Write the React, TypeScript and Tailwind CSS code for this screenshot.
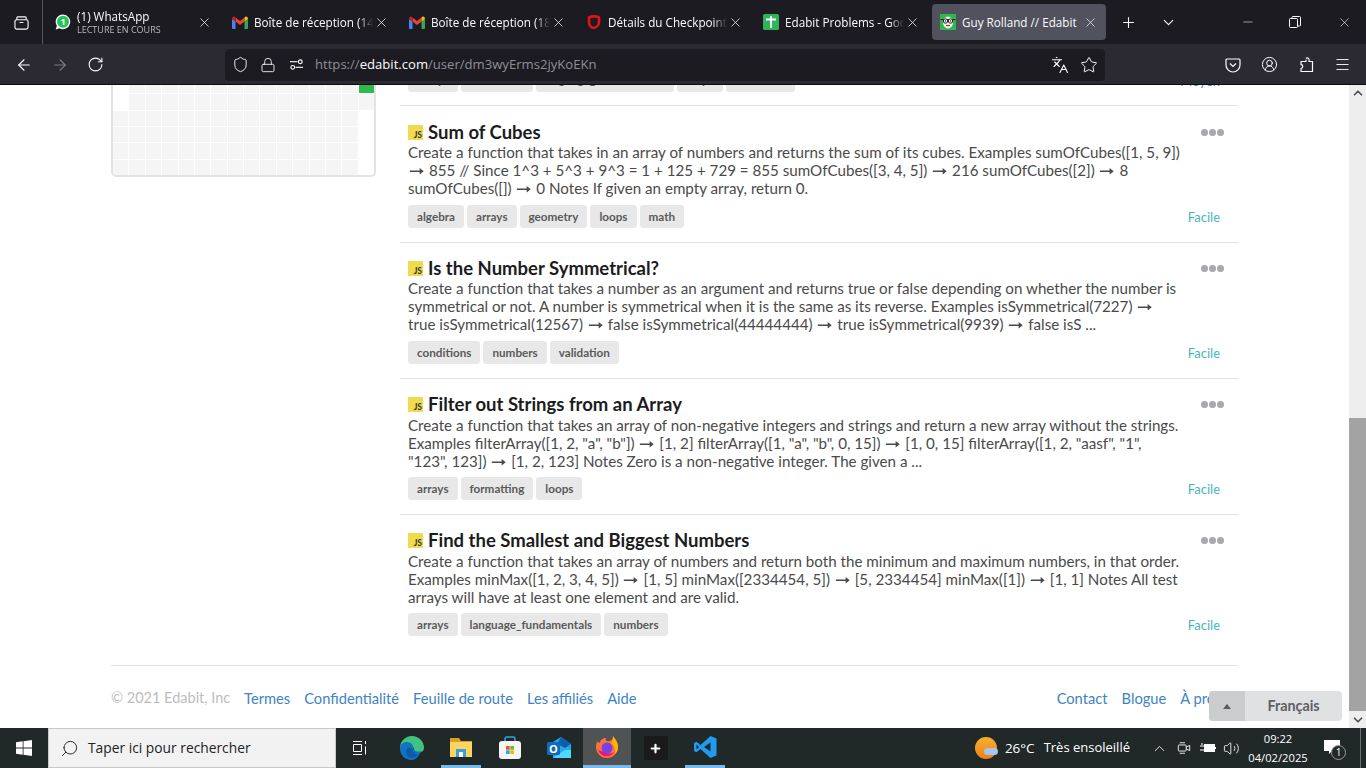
import {
  ArrowLeft,
  ArrowRight,
  ChevronDown,
  ChevronUp,
  CircleUserRound,
  Languages,
  Lock,
  Menu,
  Minus,
  Plus,
  RotateCw,
  Search,
  Shield,
  Star,
  Volume2,
  X,
} from "lucide-react";

const problems = [
  {
    title: "Sum of Cubes",
    desc: "Create a function that takes in an array of numbers and returns the sum of its cubes. Examples sumOfCubes([1, 5, 9]) ➞ 855 // Since 1^3 + 5^3 + 9^3 = 1 + 125 + 729 = 855 sumOfCubes([3, 4, 5]) ➞ 216 sumOfCubes([2]) ➞ 8 sumOfCubes([]) ➞ 0 Notes If given an empty array, return 0.",
    tags: ["algebra", "arrays", "geometry", "loops", "math"],
  },
  {
    title: "Is the Number Symmetrical?",
    desc: "Create a function that takes a number as an argument and returns true or false depending on whether the number is symmetrical or not. A number is symmetrical when it is the same as its reverse. Examples isSymmetrical(7227) ➞ true isSymmetrical(12567) ➞ false isSymmetrical(44444444) ➞ true isSymmetrical(9939) ➞ false isS ...",
    tags: ["conditions", "numbers", "validation"],
  },
  {
    title: "Filter out Strings from an Array",
    desc: 'Create a function that takes an array of non-negative integers and strings and return a new array without the strings. Examples filterArray([1, 2, "a", "b"]) ➞ [1, 2] filterArray([1, "a", "b", 0, 15]) ➞ [1, 0, 15] filterArray([1, 2, "aasf", "1", "123", 123]) ➞ [1, 2, 123] Notes Zero is a non-negative integer. The given a ...',
    tags: ["arrays", "formatting", "loops"],
  },
  {
    title: "Find the Smallest and Biggest Numbers",
    desc: "Create a function that takes an array of numbers and return both the minimum and maximum numbers, in that order. Examples minMax([1, 2, 3, 4, 5]) ➞ [1, 5] minMax([2334454, 5]) ➞ [5, 2334454] minMax([1]) ➞ [1, 1] Notes All test arrays will have at least one element and are valid.",
    tags: ["arrays", "language_fundamentals", "numbers"],
  },
];

const Gmail = () => (
  <svg viewBox="0 0 16 13" className="w-[16px] h-[13px] shrink-0">
    <path d="M0 3v9a1 1 0 0 0 1 1h2.5V5.5z" fill="#4285f4" />
    <path d="M16 3v9a1 1 0 0 1-1 1h-2.5V5.5z" fill="#34a853" />
    <path d="M3.5 5.5 8 9l4.5-3.5v-4L8 5 3.500 1.500z" fill="#ea4335" />
    <path d="M0 3c0-2.500 2.300-3.500 3.500-1.500v4z" fill="#c5221f" />
    <path d="M16 3c0-2.500-2.300-3.500-3.500-1.500v4z" fill="#fbbc04" />
  </svg>
);

const WhatsApp = () => (
  <svg viewBox="0 0 16 16" className="w-[16px] h-[16px] shrink-0">
    <path d="M8 .5a7.300 7.300 0 1 1-3.600 13.700L.7 15.400l1.200-3.600A7.300 7.300 0 0 1 8 .5z" fill="#fff" />
    <circle cx="8" cy="7.800" r="6" fill="#25c35b" />
    <text x="8" y="11" textAnchor="middle" fontSize="9" fontWeight="700" fill="#fff">1</text>
  </svg>
);

const EdabitFace = () => (
  <svg viewBox="0 0 16 16" className="w-[16px] h-[16px] shrink-0">
    <rect width="16" height="16" fill="#2fb84f" />
    <ellipse cx="8" cy="8.500" rx="5" ry="6" fill="#f1f1ea" />
    <path d="M.5 5.500h15" stroke="#222" strokeWidth="1" />
    <circle cx="5.500" cy="7" r="2.200" fill="#fff" stroke="#222" strokeWidth="1" />
    <circle cx="10.500" cy="7" r="2.200" fill="#fff" stroke="#222" strokeWidth="1" />
    <circle cx="5.500" cy="7" r="0.800" fill="#222" />
    <circle cx="10.500" cy="7" r="0.800" fill="#222" />
    <path d="M6 11.500h4" stroke="#b03030" strokeWidth="1.200" />
  </svg>
);

type TabProps = {
  icon: React.ReactNode;
  label: string;
  sub?: string;
  active?: boolean;
};

const Tab = ({ icon, label, sub, active }: TabProps) => (
  <div className={`flex items-center shrink-0 h-[36px] rounded-[4px] ${active ? "w-[174px] ml-[4px] pl-[8px] pr-[8px] bg-[#52525e]" : "w-[177px] pl-[12px] pr-[8px]"}`}>
    {icon}
    <div className={`flex-1 min-w-0 ml-[6px] overflow-hidden whitespace-nowrap ${active ? "" : "[mask-image:linear-gradient(to_right,black_88%,transparent)]"}`}>
      <div className="text-[11.700px] leading-[15px] text-[#fbfbfe]">{label}</div>
      {sub && <div className="text-[9px] leading-[12px] text-[#b8b8c0]">{sub}</div>}
    </div>
    <X className="w-[15px] h-[15px] shrink-0 ml-[1px] text-[#e8e8ec]" strokeWidth={1.300} />
  </div>
);

// the arrow comes from a fallback font, its advance is wider on the real page
const Desc = ({ text, low }: { text: string; low?: boolean }) => (
  <p className={`w-[776px] text-[15.170px] leading-[18px] text-[#4a4a4a] ${low ? "mt-[2px] mb-[7px]" : "mt-[1px] mb-[8px]"}`}>
    {text.split("➞").map((part, i) => (
      <span key={i}>
        {i > 0 && <span className="inline-block h-0 w-[13.500px] mx-[1.750px] text-center leading-[0] scale-x-125 font-['DejaVu_Sans',sans-serif]">➞</span>}
        {part}
      </span>
    ))}
  </p>
);

type ProblemProps = { title: string; desc: string; tags: string[]; index: number };

const Problem = ({ title, desc, tags, index }: ProblemProps) => (
  <div className={`border-t border-[#e1e1e1] px-[8px] ${index === 0 ? "h-[137px] pt-[16px]" : "h-[136px] pt-[15px]"}`}>
    <div className="flex items-start justify-between w-[816px]">
      <div className="flex items-center h-[20px]">
        <div className="w-[15px] h-[15px] bg-[#f0db4f] flex items-end justify-end pr-[1px] text-[8.500px] leading-[10px] font-bold text-[#323330]">JS</div>
        <h3 className="ml-[5px] text-[18.500px] leading-[20px] font-bold text-[#1b1c1d]">{title}</h3>
      </div>
      <div className="flex items-center gap-[1px] h-[20px]">
        <span className="w-[7px] h-[7px] rounded-full bg-[#a9a9ad]" />
        <span className="w-[7px] h-[7px] rounded-full bg-[#a9a9ad]" />
        <span className="w-[7px] h-[7px] rounded-full bg-[#a9a9ad]" />
      </div>
    </div>
    <Desc text={desc} low={index > 1} />
    <div className="flex items-center justify-between w-[812px]">
      <div className="flex gap-[3px]">
        {tags.map((t) => (
          <span key={t} className="h-[23px] px-[9px] rounded-[3px] bg-[#e8e8e8] text-[11.700px] leading-[23px] font-bold text-[#5a5a5a]">{t}</span>
        ))}
      </div>
      <span className="text-[13px] text-[#45b8b8] mt-[2px]">Facile</span>
    </div>
  </div>
);

const cells = Array.from({ length: 96 }, (_, i) => i);

const cellColor = (i: number) => {
  if (i === 15) return "bg-[#2fba4f]";
  if (i === 0 || i === 16 || (i > 31 && i % 16 === 15)) return "bg-white";
  return "bg-[#f5f5f5]";
};

export default function App() {
  return (
    <div className="w-[1366px] h-[768px] overflow-hidden flex flex-col bg-white font-['Lato',sans-serif]">
      {/* Firefox tab strip */}
      <div className="h-[44px] shrink-0 bg-[#1c1b22] flex items-center font-['Open_Sans',sans-serif]">
        <div className="w-[43px] h-full flex items-center justify-center border-r border-[#55555c] text-[#fbfbfe]">
          <svg viewBox="0 0 16 16" className="w-[15px] h-[15px]" fill="none" stroke="currentColor" strokeWidth="1.200">
            <rect x="1" y="5" width="14" height="10" rx="2" />
            <path d="M3 5V3a1 1 0 0 1 1-1h8a1 1 0 0 1 1 1v2M6 8h4" />
          </svg>
        </div>
        <Tab label="(1) WhatsApp" sub="LECTURE EN COURS" icon={<WhatsApp />} />
        <Tab label="Boîte de réception (14" icon={<Gmail />} />
        <Tab label="Boîte de réception (186" icon={<Gmail />} />
        <Tab
          label="Détails du Checkpoint"
          icon={
            <svg viewBox="0 0 16 16" className="w-[16px] h-[16px] shrink-0" fill="none" stroke="#e0131a" strokeWidth="2.600">
              <path d="M3 3.500C5 2 11 2 13 3.500V8c0 3-2.500 5.500-5.500 6C5 13.500 3 11 3 8z" />
            </svg>
          }
        />
        <Tab
          label="Edabit Problems - Goo"
          icon={
            <svg viewBox="0 0 16 16" className="w-[16px] h-[16px] shrink-0">
              <rect width="16" height="16" rx="1.500" fill="#2fb457" />
              <path d="M3 5.500h10M8 2v12" stroke="#fff" strokeWidth="1.800" />
            </svg>
          }
        />
        <Tab label="Guy Rolland // Edabit" icon={<EdabitFace />} active />
        <Plus className="w-[17px] h-[17px] ml-[14px] text-[#fbfbfe]" strokeWidth={1.500} />
        <ChevronDown className="w-[17px] h-[17px] ml-[23px] text-[#fbfbfe]" strokeWidth={1.500} />
        <div className="ml-auto flex items-center text-[#fbfbfe]">
          <Minus className="w-[14px] h-[14px] mr-[34px]" strokeWidth={1} />
          <svg viewBox="0 0 12 12" className="w-[12px] h-[12px] mr-[36px]" fill="none" stroke="currentColor">
            <rect x="0.500" y="2.500" width="8" height="9" rx="1" />
            <path d="M3 2.500V1.500a1 1 0 0 1 1-1h6.500a1 1 0 0 1 1 1V9a1 1 0 0 1-1 1h-2" />
          </svg>
          <X className="w-[15px] h-[15px] mr-[14px]" strokeWidth={1} />
        </div>
      </div>

      {/* Firefox toolbar */}
      <div className="h-[41px] shrink-0 bg-[#2b2a33] border-b border-[#0c0c0d] pt-[1px] flex items-center font-['Open_Sans',sans-serif]">
        <ArrowLeft className="w-[18px] h-[18px] ml-[15px] text-[#fbfbfe]" strokeWidth={1.500} />
        <ArrowRight className="w-[18px] h-[18px] ml-[18px] text-[#7a7a80]" strokeWidth={1.500} />
        <RotateCw className="w-[17px] h-[17px] ml-[18px] text-[#fbfbfe]" strokeWidth={1.500} />
        <div className="w-[880px] h-[32px] ml-[121px] rounded-[4px] bg-[#1c1b22] flex items-center text-[#fbfbfe]">
          <Shield className="w-[17px] h-[17px] ml-[7px]" strokeWidth={1.300} />
          <Lock className="w-[16px] h-[16px] ml-[11px]" strokeWidth={1.300} />
          <svg viewBox="0 0 16 16" className="w-[15px] h-[15px] ml-[13px]" fill="none" stroke="currentColor" strokeWidth="1.200">
            <circle cx="12" cy="5" r="2" />
            <path d="M1 5h8" />
            <circle cx="4" cy="11" r="2" />
            <path d="M7 11h8" />
          </svg>
          <span className="ml-[11px] text-[13.100px] text-[#8f8f96] whitespace-nowrap">
            https://<span className="text-[#fbfbfe]">edabit.com</span>/user/dm3wyErms2jyKoEKn
          </span>
          <Languages className="w-[18px] h-[18px] ml-auto" strokeWidth={1.500} />
          <Star className="w-[18px] h-[18px] ml-[11px] mr-[7px]" strokeWidth={1.300} />
        </div>
        <div className="flex items-center gap-[20px] ml-[120px] text-[#fbfbfe]">
          <svg viewBox="0 0 16 16" className="w-[16px] h-[16px]" fill="none" stroke="currentColor" strokeWidth="1.200">
            <path d="M2 2h12a1 1 0 0 1 1 1v5a7 7 0 0 1-14 0V3a1 1 0 0 1 1-1z" />
            <path d="m5 6.500 3 3 3-3" />
          </svg>
          <CircleUserRound className="w-[17px] h-[17px]" strokeWidth={1.400} />
          <svg viewBox="0 0 16 16" className="w-[16px] h-[16px]" fill="none" stroke="currentColor" strokeWidth="1.200" strokeLinejoin="round">
            <path d="M8 1.500a1.700 1.700 0 0 1 3 1V4.500h3.500v10H3v-3.200a1.800 1.800 0 1 0 0-3.600V4.500h5V2.800" />
          </svg>
          <Menu className="w-[17px] h-[17px]" strokeWidth={1.300} />
        </div>
      </div>

      {/* Page, scrolled down */}
      <div className="relative flex-1 min-h-0 overflow-hidden flex">
        <div className="flex-1 min-w-0 overflow-hidden pl-[111px] pr-[111px]">
          <div className="flex -mt-[27px]">
            <div className="w-[265px] h-[119px] shrink-0 border-2 border-t-0 border-[#e3e3e3] rounded-[5px] flex flex-col justify-end overflow-hidden">
              <div className="grid grid-cols-16 gap-[1px]">
                {cells.map((i) => (
                  <div key={i} className={`h-[15.330px] ${cellColor(i)}`} />
                ))}
              </div>
            </div>
            <div className="ml-[24px] w-[838px]">
              <div className="h-[47px] px-[8px] overflow-hidden">
                <div className="flex items-center justify-between w-[812px]">
                  <div className="flex gap-[3px]">
                    {["arrays", "conditions", "language_fundamentals", "loops", "validation"].map((t) => (
                      <span key={t} className="h-[34px] pt-[10px] px-[9px] rounded-[3px] bg-[#e8e8e8] text-[11.700px] leading-[23px] font-bold text-[#5a5a5a] nth-3:px-[7.500px]">{t}</span>
                    ))}
                  </div>
                  <span className="text-[13px] text-[#3b8fc4] mt-[14px]">Moyen</span>
                </div>
              </div>
              {problems.map((p, i) => (
                <Problem key={p.title} {...p} index={i} />
              ))}
            </div>
          </div>
          <div className="mt-[15px] border-t border-[#e1e1e1] pt-[23px] flex text-[14.700px] leading-[18px] whitespace-nowrap text-[#4183c4]">
            <span className="w-[119px] text-[14.500px] text-[#bdbdbd]">© 2021 Edabit, Inc</span>
            <span className="ml-[14px]">Termes</span>
            <span className="ml-[14px]">Confidentialité</span>
            <span className="ml-[14px]">Feuille de route</span>
            <span className="ml-[14px]">Les affiliés</span>
            <span className="ml-[14px]">Aide</span>
            <span className="ml-auto">Contact</span>
            <span className="ml-[14px]">Blogue</span>
            <span className="ml-[14px]">À propos</span>
          </div>
        </div>

        {/* Scrollbar */}
        <div className="w-[17px] shrink-0 bg-[#eeeeee] flex flex-col items-center">
          <ChevronUp className="w-[14px] h-[14px] mt-[1px] text-[#505050]" strokeWidth={3} />
          <div className="mt-[318px] w-full h-[293px] bg-[#a3a3a3]" />
          <ChevronDown className="w-[14px] h-[14px] mt-[2px] text-[#505050]" strokeWidth={3} />
        </div>

        {/* Language picker sits over the footer */}
        <div className="absolute left-[1209px] top-[606px] w-[133px] h-[30px] rounded-[4px] bg-[#e0e1e2] flex items-center overflow-hidden">
          <div className="w-[36px] h-full bg-[#cbcccd] flex items-center justify-center">
            <span className="w-0 h-0 border-x-[4px] border-x-transparent border-b-[5px] border-b-[#5c5c5c]" />
          </div>
          <span className="flex-1 text-center text-[14.300px] font-bold text-[#5f6062]">Français</span>
        </div>
      </div>

      {/* Windows taskbar */}
      <div className="h-[40px] shrink-0 bg-[#212828] flex items-center text-white font-['Open_Sans',sans-serif]">
        <div className="w-[48px] h-full flex items-center justify-center">
          <svg viewBox="0 0 16 16" className="w-[16px] h-[16px]" fill="#fff">
            <path d="M0 2.300 6.700 1.300v6.300H0zM7.500 1.200 16 0v7.600H7.500zM0 8.400h6.700v6.300L0 13.700zM7.500 8.400H16V16l-8.500-1.200z" />
          </svg>
        </div>
        <div className="w-[288px] h-full bg-[#f2f2f2] border border-[#c8c8c8] flex items-center text-[#222]">
          <Search className="w-[19px] h-[19px] ml-[11px] -scale-x-100" strokeWidth={1.200} />
          <span className="ml-[9px] text-[13.800px]">Taper ici pour rechercher</span>
        </div>
        <div className="w-[48px] h-full flex items-center justify-center">
          <svg viewBox="0 0 16 16" className="w-[16px] h-[16px]" fill="none" stroke="#fff" strokeWidth="1">
            <path d="M1 1.500h9M1 14.500h9M1.500 4.500h8v7h-8zM13.500 1v3M13.500 6.500v8" />
          </svg>
        </div>
        {/* Edge */}
        <div className="ml-[3px] w-[49px] h-full flex items-center justify-center">
          <svg viewBox="0 0 24 24" className="w-[24px] h-[24px]">
            <path d="M12 0a12 12 0 0 1 12 12c0 3-3 5-6 4.500-3-.5-4-2-4-3.500 0-2-3-4-6-3-3 1-6 3-8 3A12 12 0 0 1 12 0z" fill="#3fc380" />
            <path d="M0 12.500c0-4 3-6.500 6.500-6.500 4 0 6.500 2.500 6.500 5 0 2.500 3 6 8 4-2 5-5 9-9.500 9C5 24 0 19 0 12.500z" fill="#1273c4" />
            <path d="M7 13c1-2 4-2 5 0 1 3 3 5 6 6-2 2-4 3-6.500 3C7 22 5 17 7 13z" fill="#0f5aa8" />
          </svg>
        </div>
        {/* Explorer */}
        <div className="w-[49px] h-full flex flex-col items-center">
          <div className="flex-1 flex items-center">
            <svg viewBox="0 0 24 24" className="w-[24px] h-[24px]">
              <path d="M1 3h9l2 3h11v4H1z" fill="#d9a128" />
              <path d="M1 7h22v15H1z" fill="#fbd55e" />
              <path d="M7 14h10v8H7z" fill="#3b9de0" />
              <path d="M10 17h4v5h-4z" fill="#fff" />
            </svg>
          </div>
          <div className="w-[40px] h-[3px] bg-[#76b9ed]" />
        </div>
        {/* Store */}
        <div className="w-[49px] h-full flex items-center justify-center">
          <svg viewBox="0 0 24 24" className="w-[24px] h-[24px]">
            <path d="M7 7V3a2 2 0 0 1 2-2h6a2 2 0 0 1 2 2v4" fill="none" stroke="#2ea8e0" strokeWidth="1.500" />
            <rect x="1" y="5" width="22" height="18" rx="3" fill="#f5f5f5" />
            <path d="M8 10h3.700v3.700H8z" fill="#e8562a" />
            <path d="M12.300 10H16v3.700h-3.700z" fill="#7bb82a" />
            <path d="M8 14.300h3.700V18H8z" fill="#2ea8e0" />
            <path d="M12.300 14.300H16V18h-3.700z" fill="#f5b800" />
          </svg>
        </div>
        {/* Outlook */}
        <div className="w-[49px] h-full flex items-center justify-center">
          <svg viewBox="0 0 24 24" className="w-[24px] h-[24px]">
            <path d="M6 22V6l8-5 10 7v14z" fill="#28a8ea" />
            <path d="M14 1l10 7-6 4-8-4z" fill="#0a5fa8" />
            <path d="M6 22l12-8 6 0v8z" fill="#50d9ff" />
            <rect x="0" y="6" width="13" height="13" rx="1.500" fill="#0f6cbd" />
            <text x="6.500" y="16.500" textAnchor="middle" fontSize="11" fontWeight="700" fill="#fff">O</text>
          </svg>
        </div>
        {/* Firefox, running */}
        <div className="w-[48px] h-full bg-[#4f5353] flex flex-col items-center">
          <div className="flex-1 flex items-center">
            <svg viewBox="0 0 24 24" className="w-[24px] h-[24px]">
              <path d="M18 1c2 3 5 6 5 11a11 11 0 0 1-22 0c0-3 1-5 2-6 0 1 1 2 2 2 0-3 3-5 6-5-1 2 0 3 2 3 3 0 5-2 5-5z" fill="#ff7139" />
              <path d="M18 1c2 3 5 6 5 11 0 3-1 5-3 7 1-5-1-9-4-11 2-2 2-4 2-7z" fill="#ffb400" />
              <circle cx="12" cy="13" r="5.500" fill="#7542e5" />
              <path d="M3 14c1 5 6 8 10 7 3 0 5-2 6-4-3 2-7 2-10 0-2-1-5-1-6-3z" fill="#e31587" />
            </svg>
          </div>
          <div className="w-full h-[3px] bg-[#76b9ed]" />
        </div>
        <div className="w-[49px] h-full flex items-center justify-center">
          <div className="w-[24px] h-[24px] bg-[#1a1a1a] flex items-center justify-center">
            <Plus className="w-[13px] h-[13px] text-white" strokeWidth={4} />
          </div>
        </div>
        {/* VS Code */}
        <div className="w-[49px] h-full flex flex-col items-center">
          <div className="flex-1 flex items-center">
            <svg viewBox="0 0 24 24" className="w-[24px] h-[24px]">
              <path d="M17.500 1 23.500 3.500v17L17.500 23 7.500 14l-4 3.200L1 16V8l2.500-1.200 4 3.200z" fill="#1f9cf0" />
              <path d="M17.500 7.500 11 12l6.500 4.500z" fill="#212828" />
              <path d="M3.500 9.500v5L6 12z" fill="#212828" />
            </svg>
          </div>
          <div className="w-[40px] h-[3px] bg-[#76b9ed]" />
        </div>

        {/* Tray */}
        <div className="ml-auto flex items-center h-full">
          <div className="relative w-[22px] h-[22px] rounded-full bg-linear-to-b from-[#f6b12d] to-[#ef7f1a]">
            <div className="absolute right-[-1px] bottom-[4px] w-[14px] h-[7px] rounded-full bg-[#a9c4ea]" />
          </div>
          <span className="ml-[8px] text-[13.500px]">26°C</span>
          <span className="ml-[9px] text-[13px]">Très ensoleillé</span>
          <ChevronUp className="w-[17px] h-[17px] ml-[21px]" strokeWidth={1.200} />
          <svg viewBox="0 0 16 16" className="w-[14px] h-[14px] ml-[9px]" fill="none" stroke="#fff">
            <rect x="1.500" y="4.500" width="9" height="7" rx="1" />
            <path d="M10.500 7 14.500 5v6l-4-2M3 2h6M3 14h6" />
          </svg>
          <svg viewBox="0 0 16 12" className="w-[16px] h-[12px] ml-[9px]" fill="none" stroke="#fff">
            <rect x="4.500" y="2.500" width="10" height="7" fill="#fff" />
            <path d="M0 4h4M0 8h4M2 1v2M15.500 5v2" />
          </svg>
          <Volume2 className="w-[17px] h-[17px] ml-[7px]" strokeWidth={1.200} />
          <div className="ml-[8px] w-[60px] text-center text-[11.200px] leading-[19px]">
            <div>09:22</div>
            <div>04/02/2025</div>
          </div>
          <div className="relative ml-[16px] w-[17px] h-[24px]">
            <svg viewBox="0 0 16 14" className="w-[16px] h-[14px] mt-[4px]" fill="#fff">
              <path d="M0 0h16v11H8l-3 3v-3H0z" />
            </svg>
            <span className="absolute left-[7px] top-[9px] w-[15px] h-[15px] rounded-full bg-[#212828] border border-[#999] text-[10px] leading-[13px] text-center">1</span>
          </div>
          <div className="ml-[19px] w-[1px] h-full bg-[#6a6f6f]" />
          <div className="w-[5px]" />
        </div>
      </div>
    </div>
  );
}
